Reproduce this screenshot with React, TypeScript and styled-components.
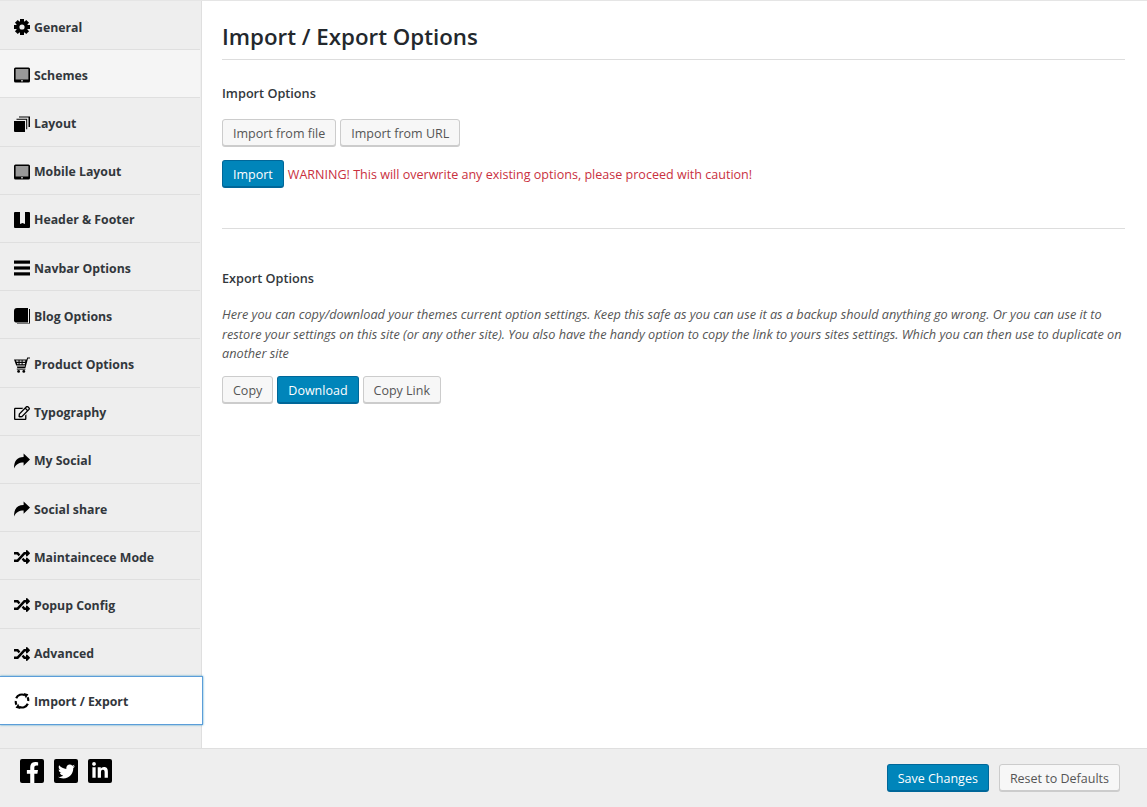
import React from 'react'
import styled, {createGlobalStyle} from 'styled-components'
import {FaRegEdit, FaRandom, FaFacebookF, FaTwitter, FaLinkedinIn} from 'react-icons/fa'

const GlobalStyle = createGlobalStyle`
    html, body {
        margin: 0;
        padding: 0;
        background: #fff;
    }
    body {
        font-family: "Open Sans", "Liberation Sans", sans-serif;
        font-size: 12.6px;
        color: #555;
    }
`

const CogIcon = () => (
    <svg viewBox="0 0 16 16" width="16" height="16">
        {[0, 45, 90, 135, 180, 225, 270, 315].map(angle => (
            <rect key={angle} x="6" y="0" width="4" height="4" fill="#000" transform={`rotate(${angle} 8 8)`} />
        ))}
        <path fillRule="evenodd" d="M8 2a6 6 0 1 1 0 12A6 6 0 0 1 8 2zm0 3.4a2.6 2.6 0 1 0 0 5.2 2.6 2.6 0 0 0 0-5.2z" fill="#000" />
    </svg>
)

const TabletIcon = () => (
    <svg viewBox="0 0 16 16" width="16" height="16">
        <rect x="0" y="0.5" width="16" height="15" rx="1.5" fill="#000" />
        <rect x="1.6" y="2" width="12.8" height="10.5" fill="#999" />
        <rect x="7" y="13.2" width="2" height="1.2" fill="#ccc" />
    </svg>
)

const LayersIcon = () => (
    <svg viewBox="0 0 16 16" width="16" height="16">
        <path d="M0 5h11v11H1a1 1 0 0 1-1-1z" fill="#000" />
        <path d="M2.5 3.8V2.8h10.7v10.4h-1V3.8z" fill="#000" />
        <path d="M5 1.5V.5h11v10.4h-1.5V1.5z" fill="#000" />
    </svg>
)

const HeaderIcon = () => (
    <svg viewBox="0 0 16 16" width="16" height="16">
        <path d="M1 0h5v12l2.5-1 2.5 1V0h4a1 1 0 0 1 1 1v14a1 1 0 0 1-1 1H1a1 1 0 0 1-1-1V1a1 1 0 0 1 1-1z" fill="#000" />
    </svg>
)

const BarsIcon = () => (
    <svg viewBox="0 0 16 16" width="16" height="16">
        <rect y="0.5" width="16" height="3.2" fill="#000" />
        <rect y="6.4" width="16" height="3.2" fill="#000" />
        <rect y="12.3" width="16" height="3.2" fill="#000" />
    </svg>
)

const BookIcon = () => (
    <svg viewBox="0 0 16 16" width="16" height="16">
        <path d="M3 0h11v14.6H2A2 2 0 0 1 0 12.8V3a3 3 0 0 1 3-3z" fill="#000" />
        <path d="M15 1h1v13.4a1.6 1.6 0 0 1-1.6 1.6H3v-.6h12z" fill="#000" />
    </svg>
)

const CartIcon = () => (
    <svg viewBox="0 0 16 16" width="16" height="16">
        <path d="M0 2.5h12.6l.6-2H16v1h-2l-2.6 9.5H3.4L2.8 9.6h8L11.1 8.4H2.2L0 2.5zM2 3.6l.5 1.2h2V3.6zm3.6 0v1.2h2V3.6zm3 0v1.2h2.5l.3-1.2zM3 5.9l.4 1.4h1.1V5.9zm2.6 0v1.4h2V5.9zm3 0v1.4h2.2l.3-1.4z" fill="#000" />
        <rect x="2.8" y="11.6" width="8.6" height="1" fill="#000" />
        <circle cx="4.6" cy="14.4" r="1.4" fill="#000" />
        <circle cx="9.8" cy="14.4" r="1.4" fill="#000" />
    </svg>
)

const ShareIcon = () => (
    <svg viewBox="0 0 16 16" width="16" height="16">
        <path d="M16 6.6L9.6.6V4C3 4 0 8 0 15.5 2 11.5 5 9.6 9.6 9.6v3.2z" fill="#000" />
    </svg>
)

const RefreshIcon = () => (
    <svg viewBox="0 0 16 16" width="16" height="16" fill="none" stroke="#000" strokeWidth="2.2">
        <path d="M2.2 5.2A6.3 6.3 0 0 1 11 2.3" />
        <path d="M13.8 10.8A6.3 6.3 0 0 1 5 13.7" />
        <path d="M13.6 4.3A6.3 6.3 0 0 1 14.2 8" />
        <path d="M2.4 11.7A6.3 6.3 0 0 1 1.8 8" />
        <path d="M9.8 0l4.6 1.2-2.6 4z" fill="#000" stroke="none" />
        <path d="M6.2 16l-4.6-1.2 2.6-4z" fill="#000" stroke="none" />
    </svg>
)

const Page = styled.div`
    width: 1147px;
    height: 807px;
    display: flex;
    flex-direction: column;
    overflow: hidden;
    box-sizing: border-box;
    border-top: 1px solid #e5e5e5;
`
const Body = styled.div`
    display: flex;
    flex: 1;
    min-height: 0;
`
const Sidebar = styled.ul`
    list-style: none;
    margin: 0;
    padding: 1.1px 0 0;
    width: 202px;
    flex: none;
    box-sizing: border-box;
    background: #eee;
    border-right: 1px solid #dfdfdf;
`
const Item = styled.li<{$active?: boolean; $hover?: boolean}>`
    position: relative;
    display: flex;
    align-items: center;
    gap: 4px;
    box-sizing: border-box;
    height: ${p => (p.$active ? '49px' : '48.2px')};
    margin-top: ${p => (p.$active ? '-0.5px' : '0')};
    padding-left: 14px;
    padding-top: ${p => (p.$active ? 1 : 3)}px;
    width: ${p => (p.$active ? '203px' : '200px')};
    margin-right: -1px;
    font-size: 12.3px;
    font-weight: 700;
    color: #32373c;
    background: ${p => (p.$active ? '#fff' : p.$hover ? '#f5f5f5' : '#eee')};
    border-bottom: 1px solid ${p => (p.$active ? '#5b9dd9' : '#dfdfdf')};
    border-top: ${p => (p.$active ? '1px solid #5b9dd9' : '0')};
    border-right: ${p => (p.$active ? '1px solid #5b9dd9' : '0')};
    box-shadow: ${p => (p.$active ? '0 0 2px rgba(30, 140, 190, .8)' : 'none')};
`
const ItemIcon = styled.span`
    display: flex;
    width: 16px;
    height: 16px;
    color: #000;
    font-size: 16px;
`
const Content = styled.main`
    flex: 1;
    min-width: 0;
    padding: 0 22px 0 20px;
`
const Title = styled.h2`
    margin: 0;
    padding: 19px 0 6px;
    font-size: 22.3px;
    line-height: 33px;
    font-weight: 600;
    color: #23282d;
    border-bottom: 1px solid #ddd;
`
const SectionTitle = styled.h3`
    margin: 0;
    font-size: 12.7px;
    line-height: 18px;
    font-weight: 600;
    color: #32373c;
`
const ImportSection = styled.section`
    padding: 24px 0 39px;
    border-bottom: 1px solid #ddd;
`
const ExportSection = styled.section`
    padding-top: 40px;
`
const ButtonRow = styled.div<{$top: number}>`
    display: flex;
    align-items: flex-start;
    gap: 4px;
    margin-top: ${p => p.$top}px;
`
const Button = styled.button<{$primary?: boolean}>`
    box-sizing: border-box;
    height: ${p => (p.$primary ? 28 : 27)}px;
    padding: 3px 10px 0;
    font-family: inherit;
    font-size: 12.5px;
    line-height: 22px;
    border-radius: 3px;
    white-space: nowrap;
    border: 1px solid ${p => (p.$primary ? '#006799' : '#ccc')};
    border-bottom-width: ${p => (p.$primary ? 2 : 1)}px;
    background: ${p => (p.$primary ? '#0085ba' : '#f7f7f7')};
    color: ${p => (p.$primary ? '#fff' : '#555')};
    box-shadow: ${p => (p.$primary ? 'none' : '0 1px 0 #ccc')};
`
const Warning = styled.span`
    color: #c9303e;
    font-size: 12.55px;
    line-height: 29px;
`
const Description = styled.p`
    margin: 18px 0 0;
    font-size: 12.7px;
    line-height: 19.5px;
    font-style: italic;
    color: #555;
`
const Footer = styled.footer`
    flex: none;
    height: 59px;
    box-sizing: border-box;
    background: #eee;
    border-top: 1px solid #dfdfdf;
    display: flex;
    justify-content: space-between;
    align-items: flex-start;
    padding: 10px 27px 0 20px;
`
const SocialLinks = styled.div`
    display: flex;
    gap: 10px;
`
const SocialLink = styled.a<{$size: number; $corner?: boolean}>`
    display: flex;
    align-items: ${p => (p.$corner ? 'flex-end' : 'center')};
    justify-content: ${p => (p.$corner ? 'flex-end' : 'center')};
    box-sizing: border-box;
    width: 24px;
    height: 24px;
    padding-right: ${p => (p.$corner ? 1 : 0)}px;
    border-radius: 2px;
    background: #000;
    color: #fff;
    font-size: ${p => p.$size}px;
`
const FooterButtons = styled.div`
    display: flex;
    align-items: flex-start;
    gap: 10px;
    padding-top: 5px;
`

const items = [
    {label: 'General', icon: <CogIcon />},
    {label: 'Schemes', icon: <TabletIcon />, hover: true},
    {label: 'Layout', icon: <LayersIcon />},
    {label: 'Mobile Layout', icon: <TabletIcon />},
    {label: 'Header & Footer', icon: <HeaderIcon />},
    {label: 'Navbar Options', icon: <BarsIcon />},
    {label: 'Blog Options', icon: <BookIcon />},
    {label: 'Product Options', icon: <CartIcon />},
    {label: 'Typography', icon: <FaRegEdit />},
    {label: 'My Social', icon: <ShareIcon />},
    {label: 'Social share', icon: <ShareIcon />},
    {label: 'Maintaincece Mode', icon: <FaRandom />},
    {label: 'Popup Config', icon: <FaRandom />},
    {label: 'Advanced', icon: <FaRandom />},
    {label: 'Import / Export', icon: <RefreshIcon />, active: true},
]

export default function App(): JSX.Element {
    return (
        <>
            <GlobalStyle />
            <Page>
                <Body>
                    <Sidebar>
                        {items.map(item => (
                            <Item key={item.label} $active={item.active} $hover={item.hover}>
                                <ItemIcon>{item.icon}</ItemIcon>
                                {item.label}
                            </Item>
                        ))}
                    </Sidebar>
                    <Content>
                        <Title>Import / Export Options</Title>
                        <ImportSection>
                            <SectionTitle>Import Options</SectionTitle>
                            <ButtonRow $top={17}>
                                <Button>Import from file</Button>
                                <Button>Import from URL</Button>
                            </ButtonRow>
                            <ButtonRow $top={14}>
                                <Button $primary>Import</Button>
                                <Warning>WARNING! This will overwrite any existing options, please proceed with caution!</Warning>
                            </ButtonRow>
                        </ImportSection>
                        <ExportSection>
                            <SectionTitle>Export Options</SectionTitle>
                            <Description>
                                Here you can copy/download your themes current option settings. Keep this safe as you can use it as a backup should anything go wrong. Or you can use it to restore your settings on this site (or any other site). You also have the handy option to copy the link to yours sites settings. Which you can then use to duplicate on another site
                            </Description>
                            <ButtonRow $top={12}>
                                <Button>Copy</Button>
                                <Button $primary>Download</Button>
                                <Button>Copy Link</Button>
                            </ButtonRow>
                        </ExportSection>
                    </Content>
                </Body>
                <Footer>
                    <SocialLinks>
                        <SocialLink $size={21} $corner><FaFacebookF /></SocialLink>
                        <SocialLink $size={17}><FaTwitter /></SocialLink>
                        <SocialLink $size={18}><FaLinkedinIn /></SocialLink>
                    </SocialLinks>
                    <FooterButtons>
                        <Button $primary>Save Changes</Button>
                        <Button>Reset to Defaults</Button>
                    </FooterButtons>
                </Footer>
            </Page>
        </>
    )
}
